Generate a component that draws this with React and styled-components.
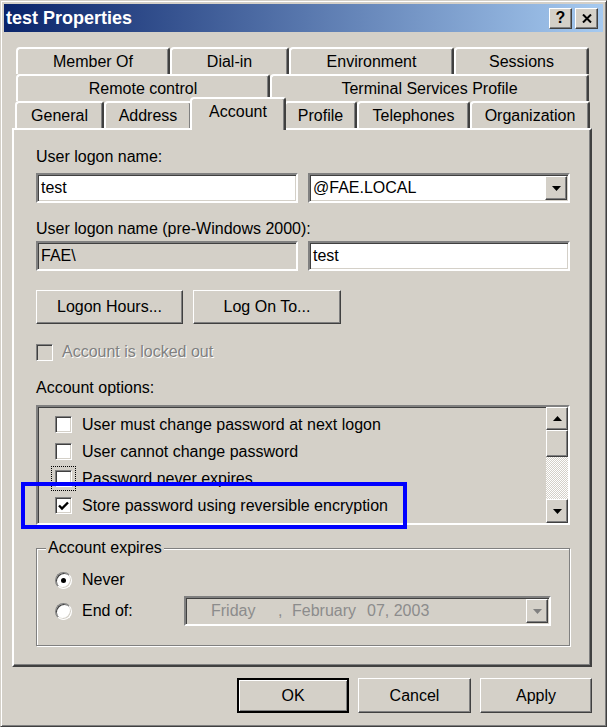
import React from "react";
import styled, { createGlobalStyle, css } from "styled-components";

const GlobalStyle = createGlobalStyle`
  html, body { margin: 0; padding: 0; background: #d4d0c8; }
  body {
    font-family: "Liberation Sans", Arial, sans-serif;
    font-size: 16px;
    color: #000;
  }
  * { box-sizing: border-box; }
`;

const raised = css`
  border: 1px solid;
  border-color: #fff #404040 #404040 #fff;
  box-shadow: inset -1px -1px #808080, inset 1px 1px #d4d0c8;
`;

const sunken = css`
  border: 2px solid;
  border-color: #808080 #fff #fff #808080;
  box-shadow: inset 1px 1px #404040, inset -1px -1px #d4d0c8;
`;

const Window = styled.div`
  position: relative;
  width: 607px;
  height: 727px;
  background: #d4d0c8;
  border: 1px solid;
  border-color: #d4d0c8 #404040 #404040 #d4d0c8;
  box-shadow: inset 1px 1px #fff, inset -1px -1px #808080;
  padding: 3px;
  display: flex;
  flex-direction: column;
`;

const TitleBar = styled.div`
  height: 28px;
  display: flex;
  align-items: center;
  justify-content: space-between;
  padding: 0 5px 0 2px;
  background: linear-gradient(to right, #0a246a, #a6caf0);
`;

const TitleText = styled.span`
  color: #fff;
  font-weight: bold;
  font-size: 18px;
`;

const TitleButtons = styled.div`
  display: flex;
  gap: 3px;
`;

const CaptionButton = styled.button`
  ${raised};
  width: 23px;
  height: 21px;
  padding: 0;
  background: #d4d0c8;
  font: bold 16px "Liberation Sans", Arial, sans-serif;
  display: flex;
  align-items: center;
  justify-content: center;
`;

const Body = styled.div`
  flex: 1;
  display: flex;
  flex-direction: column;
  padding: 15px 11px 0 8px;
`;

const TabStrip = styled.div`
  display: flex;
  flex-direction: column;
  padding-left: 4px;
`;

const TabRow = styled.div`
  display: flex;
  height: 27px;
  margin-left: ${(p) => p.$shift || 0}px;
`;

const Tab = styled.div`
  width: ${(p) => p.$w}px;
  height: 100%;
  flex: none;
  display: flex;
  align-items: center;
  justify-content: center;
  background: #d4d0c8;
  border-top: 2px solid #fff;
  border-left: 2px solid #fff;
  border-right: 2px solid #404040;
  border-top-left-radius: 4px;
  border-top-right-radius: 3px;
  box-shadow: inset -1px 0 #808080;
  white-space: nowrap;
  ${(p) =>
    p.$active &&
    css`
      position: relative;
      z-index: 2;
      height: 33px;
      width: ${p.$w + 4}px;
      margin: -4px -2px 0;
      padding-bottom: 6px;
    `}
`;

const Panel = styled.div`
  height: 539px;
  display: flex;
  flex-direction: column;
  border: 2px solid;
  border-color: #fff #404040 #404040 #fff;
  box-shadow: inset -1px -1px #808080;
  padding: 18px 20px 0 22px;
`;

const Label = styled.div`
  line-height: 18px;
  margin-top: ${(p) => p.$mt || 0}px;
  white-space: nowrap;
`;

const FieldRow = styled.div`
  display: grid;
  grid-template-columns: 1fr 1fr;
  gap: 10px;
  margin-top: ${(p) => p.$mt}px;
`;

const TextBox = styled.div`
  ${sunken};
  height: 30px;
  display: flex;
  align-items: center;
  padding-left: 3px;
  background: ${(p) => (p.$disabled ? "#d4d0c8" : "#fff")};
`;

const ComboText = styled.span`
  flex: 1;
`;

const DropButton = styled.span`
  ${raised};
  width: 22px;
  height: 24px;
  margin-right: 1px;
  margin-left: ${(p) => (p.$push ? "auto" : "0")};
  background: #d4d0c8;
  display: flex;
  align-items: center;
  justify-content: center;
  flex: none;
`;

const ButtonRow = styled.div`
  display: flex;
  gap: ${(p) => p.$gap}px;
  margin-top: ${(p) => p.$mt || 0}px;
  justify-content: ${(p) => p.$justify || "flex-start"};
`;

const PushButton = styled.button`
  ${raised};
  width: ${(p) => p.$w}px;
  height: ${(p) => p.$h}px;
  padding: 0;
  background: #d4d0c8;
  font: 16px "Liberation Sans", Arial, sans-serif;
  color: #000;
  ${(p) =>
    p.$default &&
    css`
      border: 2px solid #000;
      box-shadow: inset 1px 1px #fff, inset -1px -1px #808080;
    `}
`;

const CheckRow = styled.div`
  display: flex;
  align-items: center;
  gap: ${(p) => p.$gap}px;
  height: ${(p) => p.$h}px;
  margin-top: ${(p) => p.$mt || 0}px;
  white-space: nowrap;
`;

const Box = styled.span`
  width: 17px;
  height: 17px;
  flex: none;
  display: flex;
  align-items: center;
  justify-content: center;
  background: ${(p) => (p.$disabled ? "#d4d0c8" : "#fff")};
  border: 1px solid;
  border-color: #808080 #fff #fff #808080;
  box-shadow: inset 1px 1px #404040, inset -1px -1px #d4d0c8;
  ${(p) =>
    p.$focus &&
    css`
      outline: 1px dotted #000;
      outline-offset: 3px;
    `}
`;

const DisabledText = styled.span`
  color: #808080;
  text-shadow: 1px 1px #fff;
`;

const ListBox = styled.div`
  ${sunken};
  height: 120px;
  margin-top: 8px;
  display: flex;
  background: #d4d0c8;
`;

const ListItems = styled.div`
  flex: 1;
  padding: 4px 0 0 17px;
  display: flex;
  flex-direction: column;
`;

const ScrollBar = styled.div`
  width: 22px;
  display: flex;
  flex-direction: column;
`;

const ScrollButton = styled.span`
  ${raised};
  height: ${(p) => p.$h}px;
  background: #d4d0c8;
  display: flex;
  align-items: center;
  justify-content: center;
  flex: none;
`;

const ScrollTrack = styled.span`
  flex: 1;
  background: repeating-conic-gradient(#fff 0 25%, #d4d0c8 0 50%) 0 0 / 2px 2px;
`;

const GroupBox = styled.div`
  height: 98px;
  margin-top: 23px;
  border: 1px solid #808080;
  box-shadow: inset 1px 1px #fff, 1px 1px #fff;
  display: flex;
  flex-direction: column;
  padding-left: 18px;
`;

const GroupLegend = styled.span`
  align-self: flex-start;
  margin: -10px 0 0 -9px;
  padding: 0 2px;
  line-height: 18px;
  background: #d4d0c8;
`;

const RadioRow = styled.div`
  display: flex;
  align-items: center;
  height: ${(p) => p.$h}px;
  margin-top: ${(p) => p.$mt}px;
`;

const RadioLabel = styled.label`
  display: flex;
  align-items: center;
  gap: 10px;
  width: ${(p) => (p.$w ? `${p.$w}px` : "auto")};
  flex: none;
`;

const Radio = styled.span`
  width: 17px;
  height: 17px;
  border-radius: 50%;
  flex: none;
  background: #fff;
  border: 1px solid;
  border-color: #808080 #fff #fff #808080;
  box-shadow: inset 1px 1px #404040, inset -1px -1px #d4d0c8;
  display: flex;
  align-items: center;
  justify-content: center;
  &::after {
    content: "";
    width: 5px;
    height: 5px;
    border-radius: 50%;
    background: #000;
    display: ${(p) => (p.$checked ? "block" : "none")};
  }
`;

const DateBox = styled.div`
  ${sunken};
  width: 367px;
  height: 30px;
  display: flex;
  align-items: center;
  padding-left: 25px;
  background: #d4d0c8;
  color: #8c8c8c;
`;

const DateSeg = styled.span`
  width: ${(p) => (p.$w ? `${p.$w}px` : "auto")};
  flex: none;
  white-space: pre;
`;

const Annotation = styled.div`
  position: absolute;
  left: 20px;
  top: 481px;
  width: 386px;
  height: 47px;
  border: 4px solid #0000ff;
  pointer-events: none;
`;

const Arrow = ({ dir = "down", color = "#000" }) => (
  <svg width="9" height="5" viewBox="0 0 9 5">
    {dir === "down" ? (
      <polygon points="0,0 9,0 4.5,5" fill={color} />
    ) : (
      <polygon points="0,5 9,5 4.5,0" fill={color} />
    )}
  </svg>
);

const Check = ({ checked, disabled, focus }) => (
  <Box $disabled={disabled} $focus={focus}>
    {checked && (
      <svg width="11" height="10" viewBox="0 0 11 10">
        <polyline points="1,4.5 4,7.5 10,1.5" fill="none" stroke="#000" strokeWidth="2.4" />
      </svg>
    )}
  </Box>
);

const tabRows = [
  [
    { label: "Member Of", w: 154 },
    { label: "Dial-in", w: 119 },
    { label: "Environment", w: 165 },
    { label: "Sessions", w: 135 },
  ],
  [
    { label: "Remote control", w: 254 },
    { label: "Terminal Services Profile", w: 319 },
  ],
  [
    { label: "General", w: 89 },
    { label: "Address", w: 88 },
    { label: "Account", w: 92, active: true },
    { label: "Profile", w: 73 },
    { label: "Telephones", w: 113 },
    { label: "Organization", w: 120 },
  ],
];

const options = [
  { label: "User must change password at next logon" },
  { label: "User cannot change password" },
  { label: "Password never expires", focus: true },
  { label: "Store password using reversible encryption", checked: true },
];

export default function App() {
  return (
    <>
      <GlobalStyle />
      <Window>
        <TitleBar>
          <TitleText>test Properties</TitleText>
          <TitleButtons>
            <CaptionButton>?</CaptionButton>
            <CaptionButton>
              <svg width="10" height="9" viewBox="0 0 10 9">
                <path d="M1 0.5 L9 8.5 M9 0.5 L1 8.5" stroke="#000" strokeWidth="2" />
              </svg>
            </CaptionButton>
          </TitleButtons>
        </TitleBar>

        <Body>
          <TabStrip>
            {tabRows.map((row, i) => (
              <TabRow key={i} $shift={i === 2 ? -1 : 0}>
                {row.map((t) => (
                  <Tab key={t.label} $w={t.w} $active={t.active}>
                    {t.label}
                  </Tab>
                ))}
              </TabRow>
            ))}
          </TabStrip>

          <Panel>
            <Label>User logon name:</Label>
            <FieldRow $mt={7}>
              <TextBox>test</TextBox>
              <TextBox>
                <ComboText>@FAE.LOCAL</ComboText>
                <DropButton>
                  <Arrow />
                </DropButton>
              </TextBox>
            </FieldRow>

            <Label $mt={17}>User logon name (pre-Windows 2000):</Label>
            <FieldRow $mt={3}>
              <TextBox $disabled>FAE\</TextBox>
              <TextBox>test</TextBox>
            </FieldRow>

            <ButtonRow $gap={10} $mt={19}>
              <PushButton $w={147} $h={34}>Logon Hours...</PushButton>
              <PushButton $w={148} $h={34}>Log On To...</PushButton>
            </ButtonRow>

            <CheckRow $gap={9} $h={18} $mt={19}>
              <Check disabled />
              <DisabledText>Account is locked out</DisabledText>
            </CheckRow>

            <Label $mt={18}>Account options:</Label>
            <ListBox>
              <ListItems>
                {options.map((o) => (
                  <CheckRow key={o.label} $gap={10} $h={27}>
                    <Check checked={o.checked} focus={o.focus} />
                    <span>{o.label}</span>
                  </CheckRow>
                ))}
              </ListItems>
              <ScrollBar>
                <ScrollButton $h={23}>
                  <Arrow dir="up" />
                </ScrollButton>
                <ScrollButton $h={27} />
                <ScrollTrack />
                <ScrollButton $h={24}>
                  <Arrow />
                </ScrollButton>
              </ScrollBar>
            </ListBox>

            <GroupBox>
              <GroupLegend>Account expires</GroupLegend>
              <RadioRow $h={20} $mt={13}>
                <RadioLabel>
                  <Radio $checked />
                  Never
                </RadioLabel>
              </RadioRow>
              <RadioRow $h={30} $mt={6}>
                <RadioLabel $w={129}>
                  <Radio />
                  End of:
                </RadioLabel>
                <DateBox>
                  <DateSeg $w={67}>Friday</DateSeg>
                  <DateSeg $w={14}>,</DateSeg>
                  <DateSeg $w={75}>February</DateSeg>
                  <DateSeg>07, 2003</DateSeg>
                  <DropButton $push>
                    <Arrow color="#808080" />
                  </DropButton>
                </DateBox>
              </RadioRow>
            </GroupBox>
          </Panel>

          <ButtonRow $gap={9} $mt={11} $justify="flex-end">
            <PushButton $w={112} $h={35} $default>OK</PushButton>
            <PushButton $w={113} $h={35}>Cancel</PushButton>
            <PushButton $w={112} $h={35}>Apply</PushButton>
          </ButtonRow>
        </Body>

        <Annotation />
      </Window>
    </>
  );
}
